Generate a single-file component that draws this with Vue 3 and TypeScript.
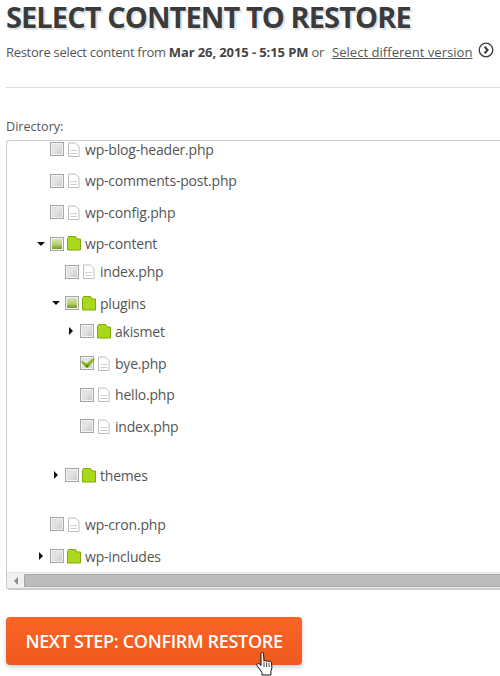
<script setup lang="ts">
interface Row {
  name: string
  level: number
  kind: 'file' | 'folder'
  arrow?: 'open' | 'closed'
  state?: 'partial' | 'checked'
  first?: boolean
  last?: boolean
}

const rows: Row[] = [
  { name: 'wp-blog-header.php', level: 0, kind: 'file' },
  { name: 'wp-comments-post.php', level: 0, kind: 'file' },
  { name: 'wp-config.php', level: 0, kind: 'file' },
  { name: 'wp-content', level: 0, kind: 'folder', arrow: 'open', state: 'partial' },
  { name: 'index.php', level: 1, kind: 'file', first: true },
  { name: 'plugins', level: 1, kind: 'folder', arrow: 'open', state: 'partial' },
  { name: 'akismet', level: 2, kind: 'folder', arrow: 'closed', first: true },
  { name: 'bye.php', level: 2, kind: 'file', state: 'checked' },
  { name: 'hello.php', level: 2, kind: 'file' },
  { name: 'index.php', level: 2, kind: 'file', last: true },
  { name: 'themes', level: 1, kind: 'folder', arrow: 'closed', last: true },
  { name: 'wp-cron.php', level: 0, kind: 'file' },
  { name: 'wp-includes', level: 0, kind: 'folder', arrow: 'closed' },
]
</script>

<template>
  <main class="page">
    <h1 class="title">SELECT CONTENT TO RESTORE</h1>
    <p class="intro">
      <span>Restore select content from <b>Mar 26, 2015 - 5:15 PM</b> or</span>
      <a class="link">Select different version</a>
      <svg class="go" width="16" height="16" viewBox="0 0 16 16">
        <circle cx="8" cy="8" r="6.8" fill="#fff" stroke="#3c3c3c" stroke-width="1.3" />
        <path d="M6.600 4.800 9.600 8l-3 3.200" fill="none" stroke="#3c3c3c" stroke-width="2" />
      </svg>
    </p>
    <hr class="rule" />
    <label class="dir-label">Directory:</label>

    <section class="tree-box">
      <ul class="tree">
        <li
          v-for="(row, i) in rows"
          :key="i"
          class="row"
          :class="{ first: row.first, last: row.last }"
          :style="{ paddingLeft: 31 + row.level * 15 + 'px' }"
        >
          <span class="arrow-slot">
            <i v-if="row.arrow" :class="row.arrow === 'open' ? 'arrow-open' : 'arrow-closed'"></i>
          </span>
          <span class="check" :class="row.state">
            <svg v-if="row.state === 'checked'" class="tick" width="14" height="12" viewBox="0 0 14 12">
              <path d="M.5 3.500 5.500 6.500 13 .5 13.500 3 7 10.500 5 10.500 .5 6Z" fill="#8cb91c" />
              <path d="M4 7.500 6.500 8.500 8.500 7 6.500 10.500 5.500 10.500Z" fill="#4f7a0a" />
            </svg>
          </span>
          <svg v-if="row.kind === 'file'" class="ico" width="14" height="15" viewBox="0 0 14 15">
            <path d="M1.500 1h7l3.500 3.500v10h-10.500Z" fill="#fff" stroke="#bdbdbd" />
            <path d="M3.500 8.500h6.500M3.500 11.500h6.500" stroke="#cfcfcf" />
          </svg>
          <svg v-else class="ico" width="14" height="15" viewBox="0 0 14 15">
            <path d="M.5 14V2.500L1.500 .5h7l1.500 2.500h3.500v11Z" fill="#a8d91c" stroke="#7fa80e" />
          </svg>
          <span class="name">{{ row.name }}</span>
        </li>
      </ul>
      <div class="scrollbar">
        <span class="scroll-left"></span>
        <span class="scroll-thumb"></span>
      </div>
    </section>

    <div class="action">
      <button class="next" type="button">NEXT STEP: CONFIRM RESTORE</button>
      <svg class="hand" width="18" height="24" viewBox="0 0 18 24">
        <path
          d="M5 1.200c.8-.8 2-.8 2.500 0l.5 8c.3-1 2.200-1 2.500.3.400-.9 2.200-.9 2.500.4.500-.7 2.300-.6 2.500.8l.400 5.300-1 3.500v3.500H6v-2.500L1 13.500c-.6-1.500 1-2.700 2.300-1.500l1.700 1.500Z"
          fill="#fff"
          stroke="#111"
          stroke-width="1"
        />
        <path d="M8 10v5M10.600 10.500v4.500M13.100 11v4" stroke="#111" stroke-width=".8" fill="none" />
      </svg>
    </div>
  </main>
</template>

<style>
html, body { margin: 0; background: #fff; }
</style>

<style scoped>
.page {
  width: 500px;
  height: 676px;
  overflow: hidden;
  box-sizing: border-box;
  padding-left: 6px;
  font-family: "Open Sans", sans-serif;
  color: #555;
}
.title {
  margin: 0;
  height: 38px;
  line-height: 34px;
  font-size: 29px;
  font-weight: 700;
  letter-spacing: -.92px;
  color: #3b3b3b;
  text-shadow: 2px 2px 0 #dfe3e8;
  white-space: nowrap;
}
.intro {
  display: flex;
  align-items: center;
  margin: 0;
  height: 28px;
  font-size: 13px;
  letter-spacing: -.3px;
  color: #555;
  white-space: nowrap;
}
.intro b {
  font-weight: 700;
  letter-spacing: -.1px;
  color: #444;
}
.link {
  margin-left: 8px;
  text-decoration: underline;
  font-size: 13.100px;
  letter-spacing: 0;
  color: #555;
}
.go { margin-left: 5.500px; margin-top: -4px; }
.rule {
  margin: 21px 0 0;
  border: 0;
  border-top: 1px solid #ddd;
}
.dir-label {
  display: block;
  margin-top: 30px;
  height: 22px;
  line-height: 18px;
  font-size: 12.600px;
  color: #555;
}
.tree-box {
  position: relative;
  height: 447px;
  margin-right: -20px;
  border: 1px solid #ccc;
  border-right: 0;
  border-top-left-radius: 4px;
  border-bottom-left-radius: 4px;
  border-bottom-width: 2px;
  box-sizing: content-box;
  overflow: hidden;
  display: flex;
  flex-direction: column;
}
.tree {
  flex: 1;
  min-height: 0;
  list-style: none;
  margin: -7.700px 0 0;
  padding: 0;
  overflow: hidden;
}
.row {
  display: flex;
  align-items: center;
  height: 31.6px;
  box-sizing: border-box;
  font-size: 14px;
  letter-spacing: -.2px;
  color: #555;
}
.row.first { margin-top: -3.600px; }
.row.last { margin-bottom: 17.500px; }
.arrow-slot {
  flex: none;
  width: 12px;
  display: flex;
  justify-content: center;
  align-items: center;
  position: relative;
  left: -3px;
}
.arrow-open {
  border-left: 4px solid transparent;
  border-right: 4px solid transparent;
  border-top: 4px solid #111;
}
.arrow-closed {
  border-top: 4px solid transparent;
  border-bottom: 4px solid transparent;
  border-left: 4px solid #111;
}
.check {
  position: relative;
  flex: none;
  width: 12px;
  height: 12px;
  border: 1px solid #a4a4a4;
  background: linear-gradient(135deg, #dcdcdc, #e6e6e6 40%, #c6c6c6);
  box-shadow: inset 0 0 0 1px #f4f4f4;
}
.check.partial {
  background: linear-gradient(#dfe6c9, #b5cf6a 55%, #5f8c14);
}
.tick { position: absolute; left: 0; top: 0; }
.ico { flex: none; margin-left: 3px; }
.name { margin-left: 4px; white-space: nowrap; }
.scrollbar {
  flex: none;
  display: flex;
  align-items: center;
  height: 16px;
  background: #f1f1f1;
  border-top: 1px solid #e6e6e6;
  box-sizing: border-box;
}
.scroll-left {
  flex: none;
  margin-left: 7px;
  margin-right: 6px;
  border-top: 4px solid transparent;
  border-bottom: 4px solid transparent;
  border-right: 4px solid #8a8a8a;
}
.scroll-thumb {
  flex: 1;
  height: 13px;
  background: #bcbcbc;
  border: 1px solid #a8a8a8;
  box-sizing: border-box;
}
.action {
  position: relative;
  margin-top: 27px;
  width: 296px;
}
.next {
  display: block;
  width: 296px;
  height: 48px;
  border: 0;
  border-radius: 4px;
  padding: 0;
  background: linear-gradient(#f96526, #ee5a1e);
  box-shadow: 0 2px 4px rgba(0, 0, 0, .2);
  color: #fff;
  font-family: "Open Sans", sans-serif;
  font-size: 18px;
  font-weight: 600;
  letter-spacing: -.33px;
  white-space: nowrap;
}
.hand { position: absolute; left: 250px; top: 35px; }
</style>
